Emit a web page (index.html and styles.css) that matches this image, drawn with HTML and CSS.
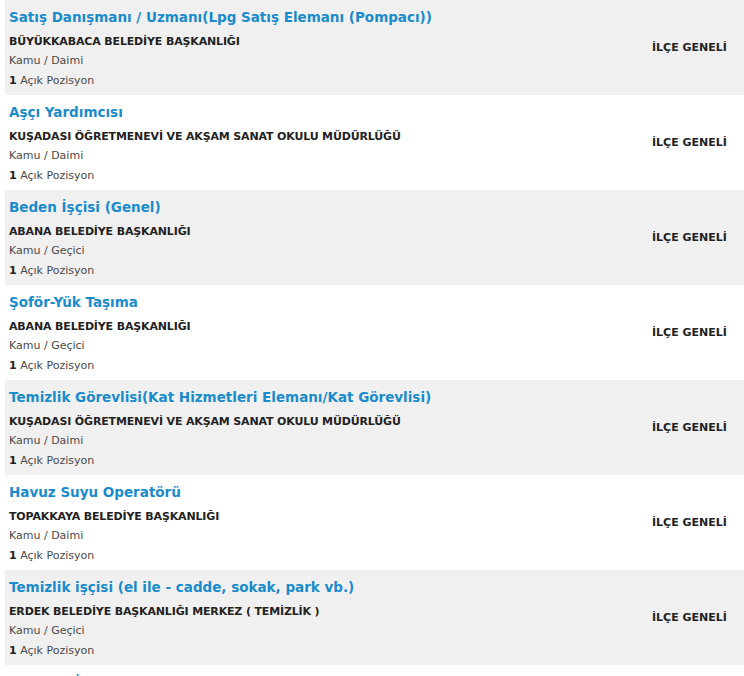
FILE: index.html
```html
<!DOCTYPE html>
<html lang="tr">
<head>
<meta charset="utf-8">
<link rel="stylesheet" href="styles.css">
</head>
<body>
<div class="list">
  <div class="job alt">
    <div class="info">
      <a class="title">Satış Danışmanı / Uzmanı(Lpg Satış Elemanı (Pompacı))</a>
      <div class="org">BÜYÜKKABACA BELEDİYE BAŞKANLIĞI</div>
      <div class="meta">Kamu / Daimi</div>
      <div class="meta"><b>1</b> Açık Pozisyon</div>
    </div>
    <div class="area">İLÇE GENELİ</div>
  </div>
  <div class="job">
    <div class="info">
      <a class="title">Aşçı Yardımcısı</a>
      <div class="org">KUŞADASI ÖĞRETMENEVİ VE AKŞAM SANAT OKULU MÜDÜRLÜĞÜ</div>
      <div class="meta">Kamu / Daimi</div>
      <div class="meta"><b>1</b> Açık Pozisyon</div>
    </div>
    <div class="area">İLÇE GENELİ</div>
  </div>
  <div class="job alt">
    <div class="info">
      <a class="title">Beden İşçisi (Genel)</a>
      <div class="org">ABANA BELEDİYE BAŞKANLIĞI</div>
      <div class="meta">Kamu / Geçici</div>
      <div class="meta"><b>1</b> Açık Pozisyon</div>
    </div>
    <div class="area">İLÇE GENELİ</div>
  </div>
  <div class="job">
    <div class="info">
      <a class="title">Şoför-Yük Taşıma</a>
      <div class="org">ABANA BELEDİYE BAŞKANLIĞI</div>
      <div class="meta">Kamu / Geçici</div>
      <div class="meta"><b>1</b> Açık Pozisyon</div>
    </div>
    <div class="area">İLÇE GENELİ</div>
  </div>
  <div class="job alt">
    <div class="info">
      <a class="title">Temizlik Görevlisi(Kat Hizmetleri Elemanı/Kat Görevlisi)</a>
      <div class="org">KUŞADASI ÖĞRETMENEVİ VE AKŞAM SANAT OKULU MÜDÜRLÜĞÜ</div>
      <div class="meta">Kamu / Daimi</div>
      <div class="meta"><b>1</b> Açık Pozisyon</div>
    </div>
    <div class="area">İLÇE GENELİ</div>
  </div>
  <div class="job">
    <div class="info">
      <a class="title">Havuz Suyu Operatörü</a>
      <div class="org">TOPAKKAYA BELEDİYE BAŞKANLIĞI</div>
      <div class="meta">Kamu / Daimi</div>
      <div class="meta"><b>1</b> Açık Pozisyon</div>
    </div>
    <div class="area">İLÇE GENELİ</div>
  </div>
  <div class="job alt">
    <div class="info">
      <a class="title">Temizlik işçisi (el ile - cadde, sokak, park vb.)</a>
      <div class="org">ERDEK BELEDİYE BAŞKANLIĞI MERKEZ ( TEMİZLİK )</div>
      <div class="meta">Kamu / Geçici</div>
      <div class="meta"><b>1</b> Açık Pozisyon</div>
    </div>
    <div class="area">İLÇE GENELİ</div>
  </div>
  <div class="job">
    <div class="info">
      <a class="title">Temizlik İşçisi</a>
      <div class="org">ERDEK BELEDİYE BAŞKANLIĞI</div>
      <div class="meta">Kamu / Geçici</div>
      <div class="meta"><b>1</b> Açık Pozisyon</div>
    </div>
    <div class="area">İLÇE GENELİ</div>
  </div>
</div>
</body>
</html>
```
FILE: styles.css
```css
html, body {
  margin: 0;
  padding: 0;
  background: #fff;
}
body {
  font-family: "DejaVu Sans", Tahoma, Verdana, sans-serif;
  color: #333;
  overflow: hidden;
}
.list {
  padding-left: 5px;
}
.job {
  display: flex;
  align-items: center;
  height: 95px;
  box-sizing: border-box;
  background: #fff;
}
.job.alt {
  background: #f0f0f0;
}
.info {
  flex: 1;
  padding: 7px 4px 0;
  align-self: flex-start;
}
.title {
  display: block;
  color: #1a8bcb;
  font-weight: bold;
  font-size: 13.5px;
  line-height: 20px;
}
.org {
  font-size: 11px;
  font-weight: bold;
  color: #222;
  line-height: 18px;
  margin-top: 6px;
  letter-spacing: -0.15px;
}
.meta {
  font-size: 11px;
  color: #4a4a4a;
  line-height: 20px;
}
.meta b {
  color: #222;
}
.area {
  width: 92px;
  font-size: 11px;
  font-weight: bold;
  color: #222;
}
```
